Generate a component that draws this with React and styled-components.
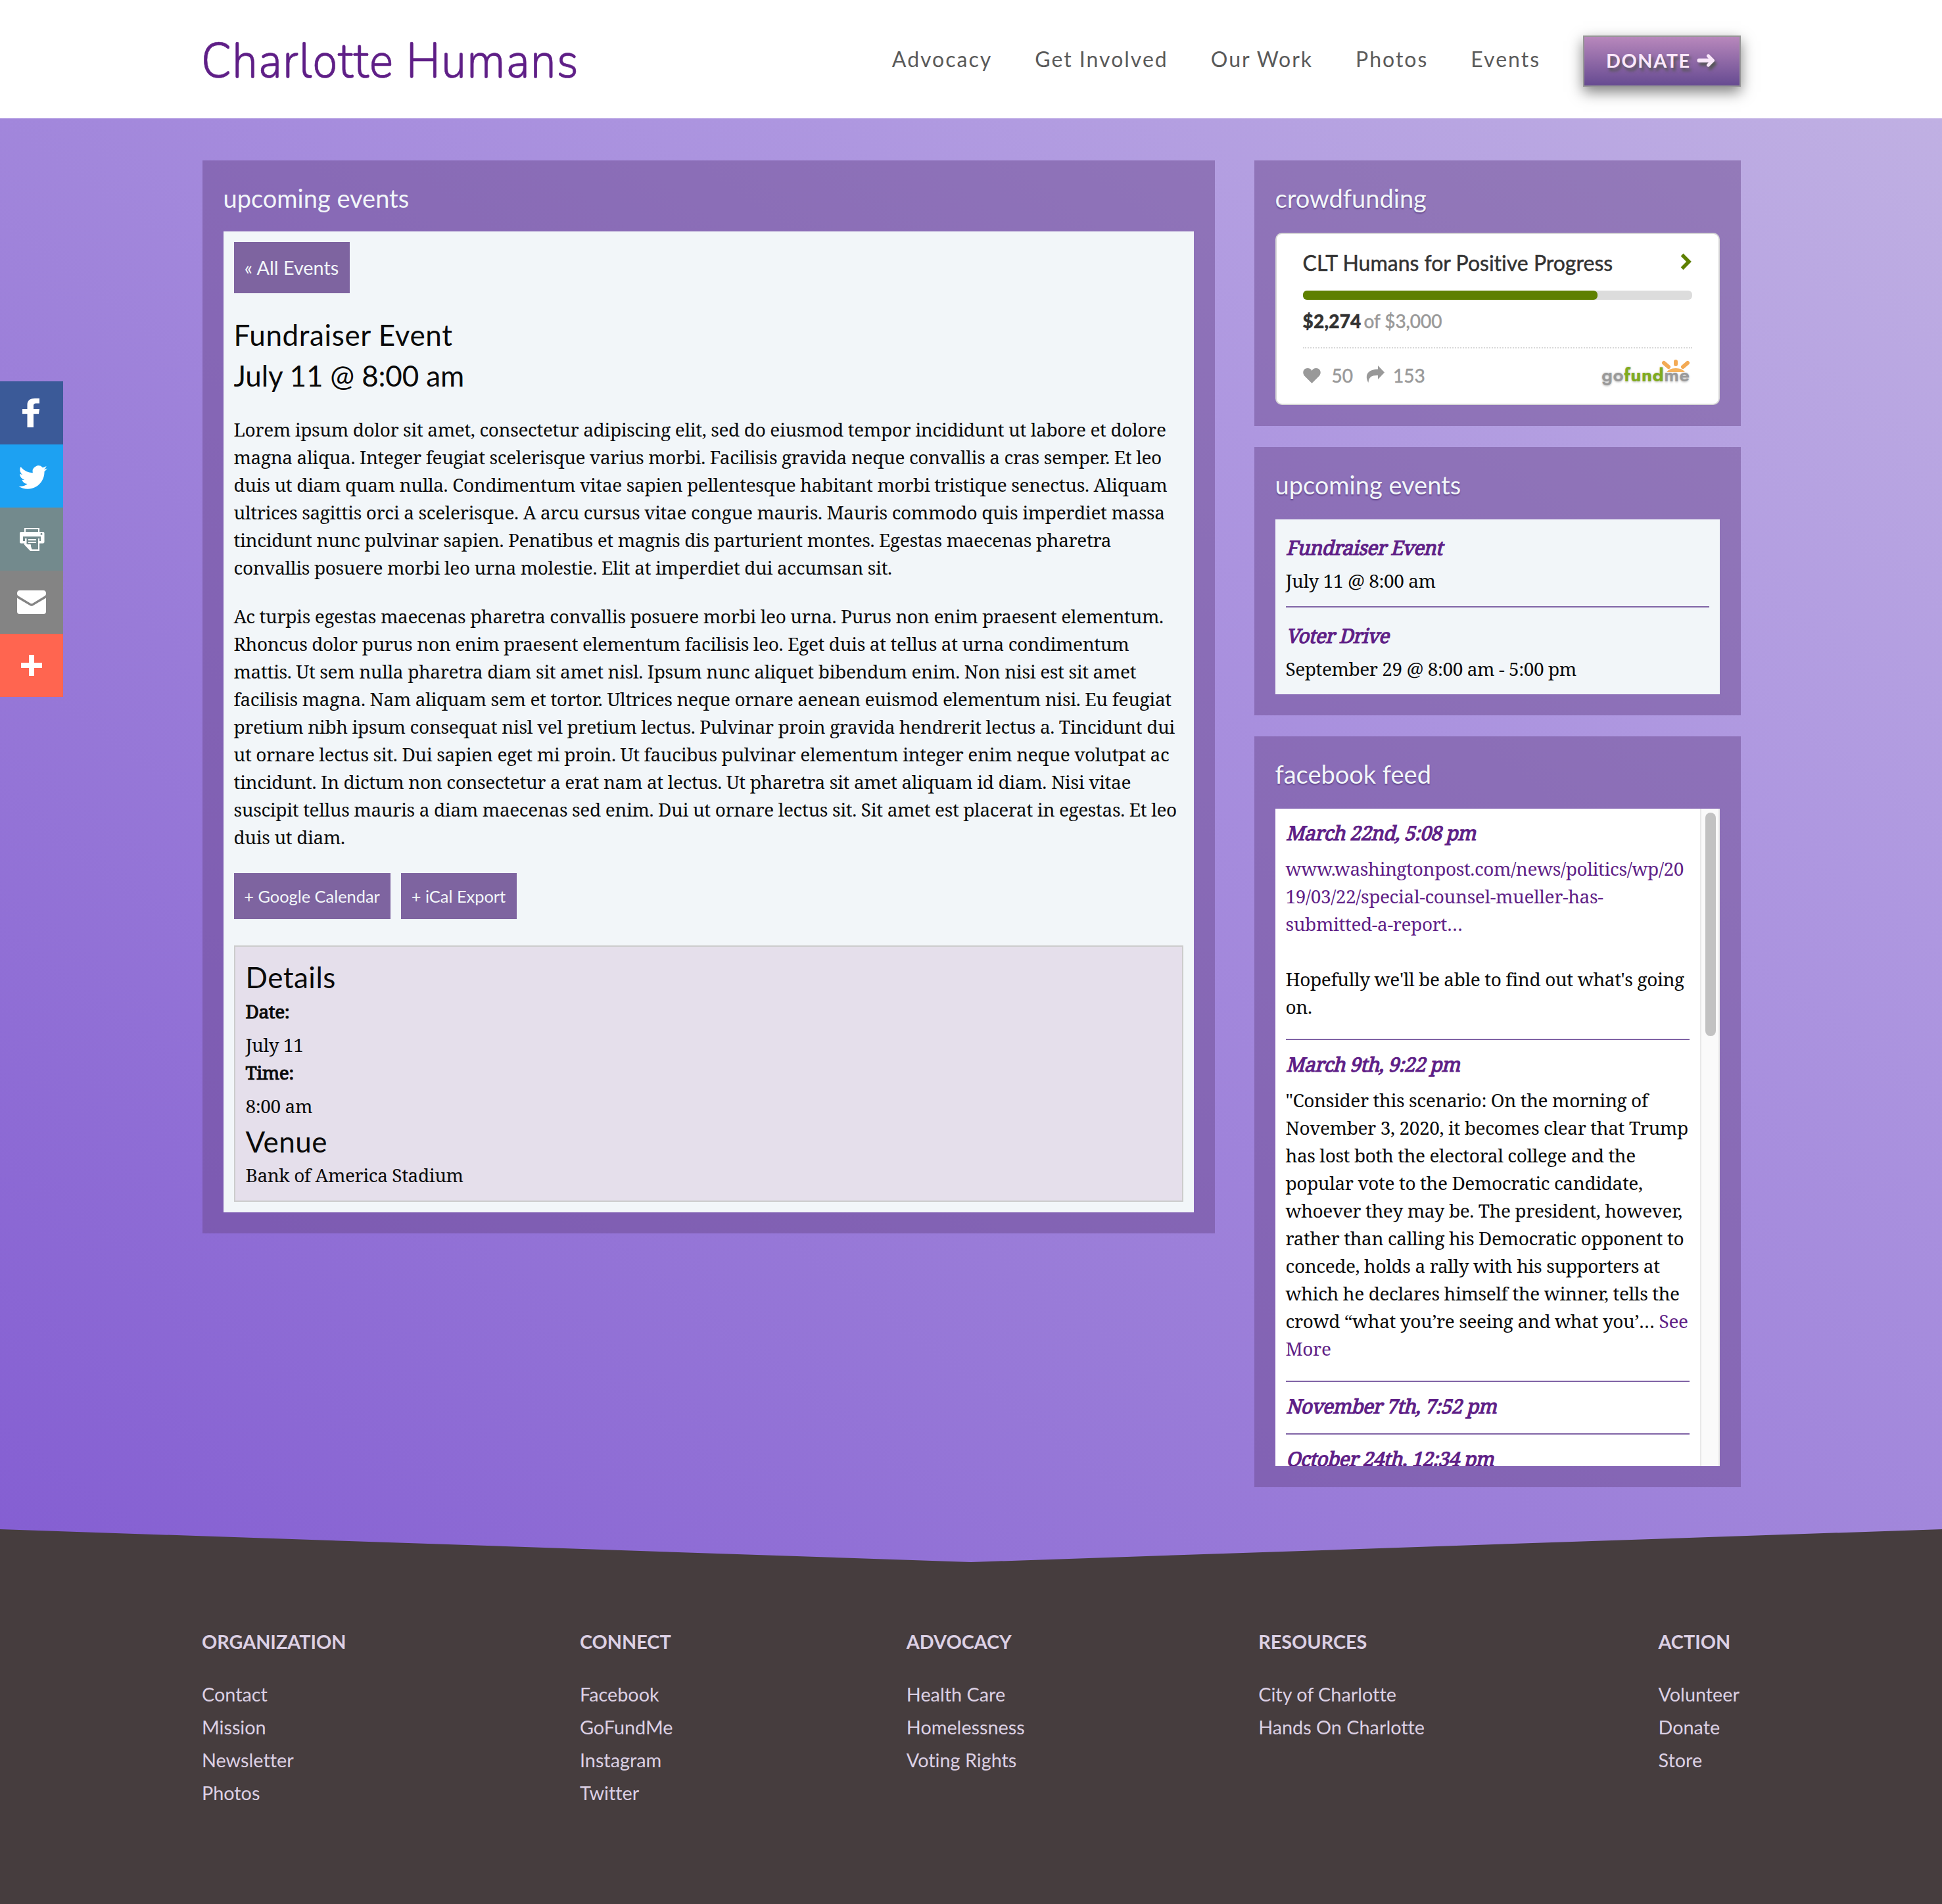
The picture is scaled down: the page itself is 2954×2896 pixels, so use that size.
import React from "react";
import styled, { createGlobalStyle } from "styled-components";

const C = {
  brand: "#5f1f87",
  plum: "#7e64a0",
  paper: "#f2f6f9",
  ink: "#0a0a0a",
  footer: "#463d3e",
  lilac: "#dcd0e4",
};
const sans = `Lato, "Open Sans", sans-serif`;
const serif = `"Noto Serif", "Liberation Serif", serif`;

const Global = createGlobalStyle`
  *, *::before, *::after { box-sizing: border-box; font-variant-ligatures: none !important; }
  html, body { margin: 0; padding: 0; }
  body { background: ${C.footer}; color: ${C.ink}; font: 28px/42px ${serif}; }
  h1, h2, h3, h4, p, ul, dl, dd, dt { margin: 0; padding: 0; font-weight: 400; }
  ul { list-style: none; }
  a { color: inherit; text-decoration: none; }
`;

/* ---------- header ---------- */
const Header = styled.header`
  display: flex;
  align-items: flex-start;
  justify-content: space-between;
  height: 180px;
  padding: 54px 306px 0 306px;
  background: #fff;
`;
const Logo = styled.a`
  margin-top: -10px;
  color: ${C.brand};
  font: 350 77px/98px Nunito, Dosis, ${sans};
  letter-spacing: 1.4px;
  white-space: nowrap;
  -webkit-text-stroke: 0.7px currentColor;
  transform: scaleX(0.893);
  transform-origin: 0 0;
`;
const Nav = styled.nav`
  display: flex;
  align-items: flex-start;
`;
const NavLink = styled.a`
  margin-right: 65px;
  color: #5a5a5a;
  font: 32px/72px ${sans};
  letter-spacing: 2px;
  white-space: nowrap;
`;
const Donate = styled.a`
  display: flex;
  align-items: center;
  gap: 9px;
  width: 240px;
  height: 78px;
  padding: 0 0 3px 33px;
  border: 2px solid #969696;
  background: linear-gradient(#b888bc, #664a91);
  box-shadow: 0 8px 20px rgba(0, 0, 0, 0.5);
  color: #fbe8fb;
  font: 700 28.8px/40px ${sans};
  letter-spacing: 1.6px;
  text-shadow: 3px 5px 4px #555;
  svg { filter: drop-shadow(3px 5px 2px #555); }
`;

/* ---------- page body ---------- */
const Main = styled.main`
  display: grid;
  grid-template-columns: 1540px 740px;
  column-gap: 60px;
  align-items: start;
  height: 2196px;
  padding: 64px 0 0 307.5px;
  background: linear-gradient(to top right, #845ed2 0%, #997bd8 36%, #ae97e0 71.3%, #c0b0e3 100%);
`;
const Sidebar = styled.aside`
  display: flex;
  flex-direction: column;
  gap: 32px;
`;
const Panel = styled.section`
  padding: 32px;
  background: rgba(107, 73, 143, 0.5);
`;
const PanelTitle = styled.h2`
  height: ${(p) => (p.$raised ? 78 : 76)}px;
  color: ${C.paper};
  font: 38px/51px ${sans};
  text-shadow: ${(p) => (p.$raised ? "0 2px 2px rgba(70, 40, 110, 0.55)" : "none")};
`;
const Sheet = styled.div`
  padding: 16px;
  background: ${C.paper};
`;
const Button = styled.a`
  display: flex;
  align-items: center;
  justify-content: center;
  width: ${(p) => p.$width}px;
  height: ${(p) => (p.$small ? 70 : 78)}px;
  background: ${C.plum};
  color: ${C.paper};
  font: ${(p) => (p.$small ? 25.4 : 28.8)}px/40px ${sans};
  white-space: nowrap;
`;
const ButtonRow = styled.div`
  display: flex;
  gap: 16px;
  margin: 34px 0 40px;
`;
const EventTitle = styled.h1`
  margin-top: 32px;
  font: 44px/62px ${sans};
`;
const Copy = styled.p`
  margin-top: ${(p) => (p.$first ? 30 : 32)}px;
  letter-spacing: -0.38px;
  white-space: nowrap;
`;
const Line = styled.span`
  display: block;
  letter-spacing: ${(p) => p.$track || "inherit"};
`;
const Details = styled.div`
  height: 390px;
  padding: 16px;
  border: 2px solid #ccc;
  background: #e5dfeb;
  letter-spacing: -0.43px;
`;
const DetailHeading = styled.h3`
  margin-top: ${(p) => (p.$spaced ? 3 : 0)}px;
  font: 44px/${(p) => (p.$spaced ? 60 : 61)}px ${sans};
  letter-spacing: 0.5px;
`;
const Term = styled.dt`
  height: 42px;
  -webkit-text-stroke: 1px currentColor;
`;
const Value = styled.dd`
  padding-top: 9px;
`;

/* ---------- crowdfunding widget ---------- */
const Fund = styled.div`
  height: 262px;
  padding: 28px 40px 0;
  border: 2px solid #d6d6d6;
  border-radius: 10px;
  background: #fff;
  color: #333;
  font-family: ${sans};
`;
const FundHead = styled.div`
  display: flex;
  justify-content: space-between;
  align-items: flex-start;
  height: 58px;
  font-size: 32px;
  line-height: 32px;
  white-space: nowrap;
  -webkit-text-stroke: 0.5px currentColor;
  svg { margin-top: 1px; }
`;
const Track = styled.div`
  height: 14px;
  border-radius: 6px;
  background: #dcdcdc;
`;
const Fill = styled.div`
  width: 75.7%;
  height: 100%;
  border-radius: 6px;
  background: #5e8000;
`;
const Raised = styled.div`
  height: 74px;
  padding-top: 11px;
  border-bottom: 2px dotted #d8d8d8;
  color: #999;
  letter-spacing: -0.1px;
  -webkit-text-stroke: 0.5px currentColor;
  b { margin-right: -3px; color: #333; font-weight: 900; letter-spacing: 0.2px; }
`;
const FundFoot = styled.div`
  display: flex;
  align-items: flex-start;
  height: 60px;
  padding-top: 16px;
  color: #999;
`;
const Count = styled.span`
  padding-top: 4px;
  margin: 0 20px 0 ${(p) => p.$gap}px;
  line-height: 42px;
  -webkit-text-stroke: 0.5px currentColor;
`;
const FootIcon = styled.svg`
  margin-top: ${(p) => p.$top}px;
`;
const Brand = styled.div`
  position: relative;
  margin: 4px 3px 0 auto;
  color: #999;
  font: 600 28px/42px Jost, ${sans};
  letter-spacing: 0.5px;
  text-shadow: 0 0 3px rgba(0, 0, 0, 0.22), 0 2px 3px rgba(0, 0, 0, 0.12);
  b { color: #7fab20; font-weight: 700; }
  svg { position: absolute; right: -2px; top: -4px; }
`;

/* ---------- events + feed ---------- */
const Slanted = styled.h3`
  width: max-content;
  color: ${C.brand};
  font-size: 30px;
  line-height: 42px;
  letter-spacing: -0.65px;
  -webkit-text-stroke: 1.2px currentColor;
  transform: skewX(-14deg);
  transform-origin: 0 32px;
  white-space: nowrap;
`;
const EventItem = styled.li`
  padding-top: ${(p) => (p.$ruled ? 22 : 6)}px;
  border-top: ${(p) => (p.$ruled ? "2px solid #8064a6" : "0")};
  height: ${(p) => (p.$ruled ? 134 : 116)}px;
  letter-spacing: -0.45px;
  ${Slanted} { margin-bottom: 8px; }
`;
const EventSheet = styled(Sheet)`
  height: 266px;
`;
const FeedBox = styled.div`
  display: flex;
  height: 1000px;
  overflow: hidden;
  background: #fff;
`;
const FeedList = styled.ul`
  width: 646px;
  padding: 16px;
`;
const Post = styled.li`
  padding-bottom: ${(p) => (p.$empty ? 14 : 28)}px;
  letter-spacing: -0.4px;
  white-space: nowrap;
  & + & { padding-top: 16px; border-top: 2px solid #8064a6; }
  ${Slanted} { margin-bottom: ${(p) => (p.$empty ? 6 : 12)}px; }
`;
const Link = styled.a`
  color: ${C.brand};
`;
const ScrollTrack = styled.div`
  width: 30px;
  padding: 6px 4px 0 6px;
  border: solid #e8e8e8;
  border-width: 0 2px;
  background: #fafafa;
`;
const Thumb = styled.div`
  width: 16px;
  height: 340px;
  border-radius: 8px;
  background: #c2c2c2;
`;

/* ---------- share bar ---------- */
const Share = styled.div`
  position: fixed;
  left: 0;
  top: 580px;
  display: flex;
  flex-direction: column;
`;
const ShareButton = styled.a`
  width: 96px;
  height: 96px;
  background: ${(p) => p.$bg};
  svg { display: block; }
`;

/* ---------- footer ---------- */
const Footer = styled.footer`
  position: relative;
  display: flex;
  justify-content: space-between;
  height: 570px;
  margin-top: -50px;
  padding: 146px 308px 0 307px;
  background: ${C.footer};
  clip-path: polygon(0 0, 50% 50px, 100% 0, 100% 100%, 0 100%);
  color: ${C.lilac};
  font: 28.8px/50px ${sans};
`;
const ColumnTitle = styled.h4`
  margin-bottom: 30px;
  font-weight: 700;
  line-height: 50px;
`;

const P1 = [
  "Lorem ipsum dolor sit amet, consectetur adipiscing elit, sed do eiusmod tempor incididunt ut labore et dolore",
  "magna aliqua. Integer feugiat scelerisque varius morbi. Facilisis gravida neque convallis a cras semper. Et leo",
  "duis ut diam quam nulla. Condimentum vitae sapien pellentesque habitant morbi tristique senectus. Aliquam",
  "ultrices sagittis orci a scelerisque. A arcu cursus vitae congue mauris. Mauris commodo quis imperdiet massa",
  "tincidunt nunc pulvinar sapien. Penatibus et magnis dis parturient montes. Egestas maecenas pharetra",
  "convallis posuere morbi leo urna molestie. Elit at imperdiet dui accumsan sit.",
];
const P2 = [
  "Ac turpis egestas maecenas pharetra convallis posuere morbi leo urna. Purus non enim praesent elementum.",
  "Rhoncus dolor purus non enim praesent elementum facilisis leo. Eget duis at tellus at urna condimentum",
  "mattis. Ut sem nulla pharetra diam sit amet nisl. Ipsum nunc aliquet bibendum enim. Non nisi est sit amet",
  "facilisis magna. Nam aliquam sem et tortor. Ultrices neque ornare aenean euismod elementum nisi. Eu feugiat",
  "pretium nibh ipsum consequat nisl vel pretium lectus. Pulvinar proin gravida hendrerit lectus a. Tincidunt dui",
  "ut ornare lectus sit. Dui sapien eget mi proin. Ut faucibus pulvinar elementum integer enim neque volutpat ac",
  "tincidunt. In dictum non consectetur a erat nam at lectus. Ut pharetra sit amet aliquam id diam. Nisi vitae",
  "suscipit tellus mauris a diam maecenas sed enim. Dui ut ornare lectus sit. Sit amet est placerat in egestas. Et leo",
  "duis ut diam.",
];
const SCENARIO = [
  "\"Consider this scenario: On the morning of",
  "November 3, 2020, it becomes clear that Trump",
  "has lost both the electoral college and the",
  "popular vote to the Democratic candidate,",
  "whoever they may be. The president, however,",
  "rather than calling his Democratic opponent to",
  "concede, holds a rally with his supporters at",
  "which he declares himself the winner, tells the",
];
const URL_LINES = [
  "www.washingtonpost.com/news/politics/wp/20",
  "19/03/22/special-counsel-mueller-has-",
  "submitted-a-report…",
];
const COLUMNS = [
  ["ORGANIZATION", ["Contact", "Mission", "Newsletter", "Photos"]],
  ["CONNECT", ["Facebook", "GoFundMe", "Instagram", "Twitter"]],
  ["ADVOCACY", ["Health Care", "Homelessness", "Voting Rights"]],
  ["RESOURCES", ["City of Charlotte", "Hands On Charlotte"]],
  ["ACTION", ["Volunteer", "Donate", "Store"]],
];

const lines = (list) => list.map((t) => <Line key={t}>{t}</Line>);

/* Icons of the share bar are drawn on a 96-unit tile. */
const Tile = ({ children }) => (
  <svg width="96" height="96" viewBox="0 0 96 96" fill="#fff">{children}</svg>
);

function ShareBar() {
  return (
    <Share>
      <ShareButton $bg="#3b5a98">
        <Tile><path d="M41.500 70V49.800H34V42h7.500v-6.500C41.500 29 46 26 53 26h7v7.500h-4.500c-3.500 0-4.500 1.200-4.500 4V42h9l-1 7.800h-8V70z" /></Tile>
      </ShareButton>
      <ShareButton $bg="#1da1f2">
        <Tile><path transform="translate(28.500 28.300) scale(1.810)" d="M23.950 4.570a10 10 0 0 1-2.820.77 4.960 4.960 0 0 0 2.160-2.720 9.900 9.900 0 0 1-3.120 1.180 4.920 4.920 0 0 0-8.390 4.490A13.980 13.980 0 0 1 1.640 3.160a4.920 4.920 0 0 0 1.520 6.570 4.900 4.900 0 0 1-2.230-.62v.06a4.920 4.920 0 0 0 3.950 4.830 5 5 0 0 1-2.210.08 4.940 4.940 0 0 0 4.600 3.420A9.870 9.870 0 0 1 0 19.540a13.990 13.990 0 0 0 7.550 2.210c9.050 0 14-7.500 14-13.980 0-.21 0-.42-.02-.63a9.940 9.940 0 0 0 2.460-2.550z" /></Tile>
      </ShareButton>
      <ShareButton $bg="#738a8d">
        <Tile>
          <path fillRule="evenodd" d="M37 31h23v6h5.500q2 0 2 2v13.500q0 2-2 2H60V66H46l-9-9.500v-2h-5q-2 0-2-2V39q0-2 2-2h5zM39 33v4h19v-4zM35 44v7h3v-4h2.500v8.500l3 .5c3-1 4 0 3.500 3l1.500 4.500H58V47h2v4h2v-7zM63 38.700a1.500 1.500 0 1 0 .010 0z" />
          <path d="M43 48h12v2H43zM43 52h12v2H43z" />
        </Tile>
      </ShareButton>
      <ShareButton $bg="#848484">
        <Tile>
          <path d="M26 34.500Q26 30 30 30h36q4 0 4 4.500c0 2-.500 3-2 4L50 49.500q-2 1.200-4 0L28 38.500c-1.500-1-2-2-2-4z" />
          <path d="M26 41.500l20 11.700q2 1 4 0l20-11.700V62q0 4-4 4H30q-4 0-4-4z" />
        </Tile>
      </ShareButton>
      <ShareButton $bg="#ff6550">
        <Tile><path d="M44 32h8v12h12v8H52v12h-8V52H32v-8h12z" /></Tile>
      </ShareButton>
    </Share>
  );
}

function GoFundMe() {
  return (
    <Brand>
      go<b>fund</b>me
      <svg width="48" height="20" viewBox="0 0 48 20">
        <g stroke="#f3aa55" strokeWidth="6" strokeLinecap="round">
          <path d="M6 6l7 6M24 4v4M42 6l-7 6" />
        </g>
        <path d="M10 20Q14 14 24 14t14 6z" fill="#f6b45f" />
      </svg>
    </Brand>
  );
}

export default function App() {
  return (
    <>
      <Global />
      <Header>
        <Logo>Charlotte Humans</Logo>
        <Nav>
          {["Advocacy", "Get Involved", "Our Work", "Photos", "Events"].map((t) => (
            <NavLink key={t}>{t}</NavLink>
          ))}
          <Donate>
            DONATE
            <svg width="28" height="22" viewBox="0 0 28 22" fill="none" stroke="#fbe8fb" strokeLinecap="round" strokeLinejoin="round">
              <path d="M3.500 11H18" strokeWidth="6" />
              <path d="M17.500 4L24.500 11L17.500 18" strokeWidth="5" />
            </svg>
          </Donate>
        </Nav>
      </Header>

      <Main>
        <Panel>
          <PanelTitle>upcoming events</PanelTitle>
          <Sheet>
            <Button $width={176}>« All Events</Button>
            <EventTitle>
              <Line $track="0.6px">Fundraiser Event</Line>
              <Line $track="-0.15px">July 11 @ 8:00 am</Line>
            </EventTitle>
            <Copy $first>{lines(P1)}</Copy>
            <Copy>{lines(P2)}</Copy>
            <ButtonRow>
              <Button $small $width={238}>+ Google Calendar</Button>
              <Button $small $width={176}>+ iCal Export</Button>
            </ButtonRow>
            <Details>
              <DetailHeading>Details</DetailHeading>
              <dl>
                <Term>Date:</Term>
                <Value>July 11</Value>
                <Term>Time:</Term>
                <Value>8:00 am</Value>
              </dl>
              <DetailHeading $spaced>Venue</DetailHeading>
              <div>Bank of America Stadium</div>
            </Details>
          </Sheet>
        </Panel>

        <Sidebar>
          <Panel>
            <PanelTitle $raised>crowdfunding</PanelTitle>
            <Fund>
              <FundHead>
                CLT Humans for Positive Progress
                <svg width="18" height="26" viewBox="0 0 18 26" fill="none" stroke="#5e8000" strokeWidth="5.500">
                  <path d="M4.500 4.500L13 13L4.500 21.500" strokeLinecap="square" />
                </svg>
              </FundHead>
              <Track><Fill /></Track>
              <Raised><b>$2,274</b> of $3,000</Raised>
              <FundFoot>
                <FootIcon $top={13} width="27" height="24" viewBox="0 0 27 24" fill="#999">
                  <path d="M13.500 24L2 12.500C-1.500 8 .5 1 7 1c3 0 5.500 1.500 6.500 4C14.500 2.500 17 1 20 1c6.500 0 8.500 7 5 11.500z" />
                </FootIcon>
                <Count $gap={17}>50</Count>
                <FootIcon $top={10} width="28" height="26" viewBox="0 0 28 26" fill="#999">
                  <path d="M18 0l10 10.500L18 21v-6C9 14.500 4 17 3.500 26 -2 17 0 6 18 5.500z" />
                </FootIcon>
                <Count $gap={13}>153</Count>
                <GoFundMe />
              </FundFoot>
            </Fund>
          </Panel>

          <Panel>
            <PanelTitle $raised>upcoming events</PanelTitle>
            <EventSheet>
              <ul>
                <EventItem>
                  <Slanted>Fundraiser Event</Slanted>
                  July 11 @ 8:00 am
                </EventItem>
                <EventItem $ruled>
                  <Slanted>Voter Drive</Slanted>
                  September 29 @ 8:00 am - 5:00 pm
                </EventItem>
              </ul>
            </EventSheet>
          </Panel>

          <Panel>
            <PanelTitle $raised>facebook feed</PanelTitle>
            <FeedBox>
              <FeedList>
                <Post>
                  <Slanted>March 22nd, 5:08 pm</Slanted>
                  <Link>{lines(URL_LINES)}</Link>
                  <br />
                  <Line>Hopefully we'll be able to find out what's going</Line>
                  <Line>on.</Line>
                </Post>
                <Post>
                  <Slanted>March 9th, 9:22 pm</Slanted>
                  {lines(SCENARIO)}
                  <Line>crowd “what you’re seeing and what you’… <Link>See</Link></Line>
                  <Line><Link>More</Link></Line>
                </Post>
                <Post $empty><Slanted>November 7th, 7:52 pm</Slanted></Post>
                <Post $empty><Slanted>October 24th, 12:34 pm</Slanted></Post>
              </FeedList>
              <ScrollTrack><Thumb /></ScrollTrack>
            </FeedBox>
          </Panel>
        </Sidebar>
      </Main>

      <ShareBar />

      <Footer>
        {COLUMNS.map(([title, items]) => (
          <div key={title}>
            <ColumnTitle>{title}</ColumnTitle>
            <ul>{items.map((t) => <li key={t}>{t}</li>)}</ul>
          </div>
        ))}
      </Footer>
    </>
  );
}
